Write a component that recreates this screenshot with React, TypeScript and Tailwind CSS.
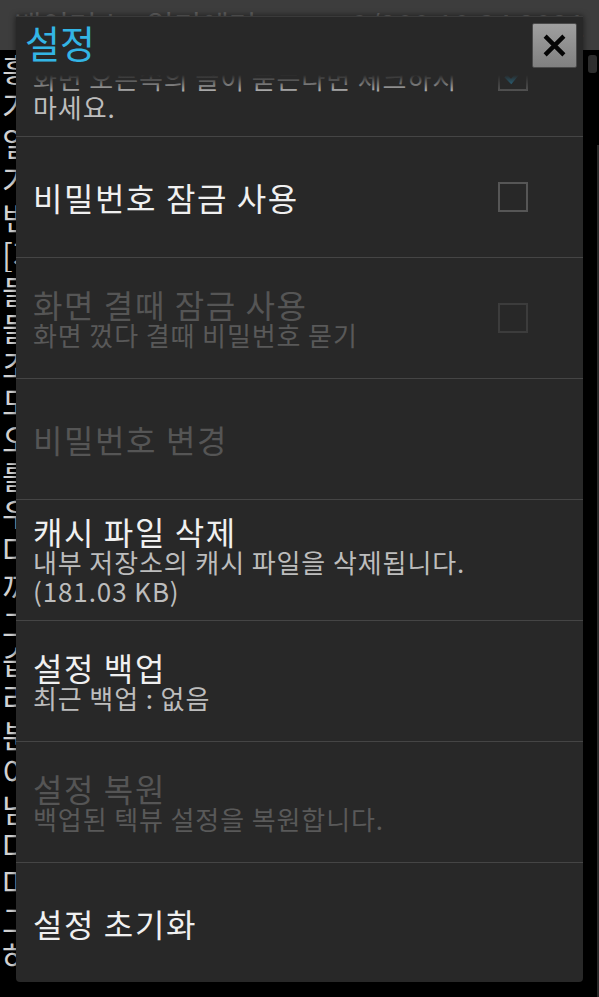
const bgLines = [
  "흥미로운 이야기가 시작되는 곳에서",
  "가끔은 그런 날도 있는 법이라고",
  "일단 모든 것을 내려놓고 생각해",
  "가장 먼저 떠오른 것은 그날의",
  "번개가 치던 밤 우리는 집으로",
  "[제 2 장] 낯선 손님이 찾아온",
  "들판을 가로지르는 바람 소리가 들려온 번",
  "들려오는 발걸음 소리에 모두가",
  "조용히 문을 열고 들어온 사람은",
  "모두가 그 사람을 바라보며",
  "오랜 시간이 지나도 잊히지 않는",
  "를 기억하는 사람은 이제",
  "우리는 그 길을 따라 천천히",
  "다시 만날 수 있을 거라고",
  "끼니를 거르며 밤새 이야기를",
  "그날 이후로 모든 것이 달라지기",
  "습관처럼 창밖을 바라보는 일이",
  "리본을 묶은 작은 상자가 책상",
  "분명히 어제까지는 없던 물건",
  "이상하게도 그 상자를 열 용기가",
  "남겨진 편지에는 짧은 인사만",
  "다음 날 아침 우리는 다시",
  "마지막으로 돌아본 마을은",
  "그리고 이야기는 그렇게",
  "하지만 누군가는 아직도",
];

type Item = {
  title: string;
  sub?: string[];
  disabled?: boolean;
  check?: "on" | "off";
};

const items: Item[] = [
  { title: "글 방향 반전", sub: ["화면 오른쪽의 글이 묻는다면 체크하지", "마세요."], check: "on" },
  { title: "비밀번호 잠금 사용", check: "off" },
  { title: "화면 결때 잠금 사용", sub: ["화면 껐다 결때 비밀번호 묻기"], disabled: true, check: "off" },
  { title: "비밀번호 변경", disabled: true },
  { title: "캐시 파일 삭제", sub: ["내부 저장소의 캐시 파일을 삭제됩니다.", "(181.03 KB)"] },
  { title: "설정 백업", sub: ["최근 백업 : 없음"] },
  { title: "설정 복원", sub: ["백업된 텍뷰 설정을 복원합니다."], disabled: true },
  { title: "설정 초기화" },
];

const SettingRow = ({ item }: { item: Item }) => {
  return (
    <div className="flex items-center h-[121px] shrink-0 pl-[17px] pr-[55px] border-b border-[#454545]">
      <div className="flex-1 flex flex-col">
        <p
          className={`text-[32px] leading-[32px] tracking-[1.6px] whitespace-nowrap ${
            item.disabled ? "text-[#555555]" : "text-[#f0f0f0]"
          }`}
        >
          {item.title}
        </p>
        {item.sub?.map((s) => (
          <p
            key={s}
            className={`text-[26px] leading-[29px] tracking-[0.9px] whitespace-nowrap ${
              item.disabled ? "text-[#595959]" : "text-[#bdbdbd]"
            }`}
          >
            {s}
          </p>
        ))}
      </div>
      {item.check && (
        <div
          className={`size-[30px] border-2 flex items-center justify-center ${
            item.disabled ? "border-[#3c3c3c]" : "border-[#565656]"
          }`}
        >
          {item.check === "on" && (
            <svg viewBox="0 0 24 24" className="size-[22px]">
              <path d="M4 12 L10 18 L20 6" fill="none" stroke="#2a8fb8" strokeWidth="4" />
            </svg>
          )}
        </div>
      )}
    </div>
  );
};

const App = () => {
  return (
    <div className="relative w-[599px] h-[997px] overflow-hidden bg-black font-['Noto_Sans_CJK_KR','Noto_Sans',sans-serif]">
      {/* page under the dialog */}
      <div className="h-[50px] bg-[#3d3d3d] flex items-start justify-between px-[14px] pt-[6px] text-[30px] leading-[36px] text-[#626262] whitespace-nowrap overflow-hidden">
        <span>밴이러스 : 읽기에러</span>
        <span>9/200 10:34 2021</span>
      </div>
      <div className="flex flex-col">
        {bgLines.map((l, i) => (
          <div key={i} className="pl-[2px] text-[32px] leading-[37px] text-[#d2d2d2] whitespace-nowrap overflow-hidden">
            {l}
          </div>
        ))}
      </div>
      <div className="absolute right-[2px] top-[55px] w-[9px] h-[18px] rounded-[3px] bg-[#2e2e2e]" />
      <div className="absolute right-0 top-[145px] bottom-0 w-[2px] bg-[#2a2a2a]" />

      {/* dialog */}
      <div className="absolute left-[16px] top-[16px] w-[567px] h-[966px] bg-[#282828] rounded-b-[4px] border-t border-[#3a3a3a] shadow-[0_0_6px_rgba(0,0,0,0.6)] flex flex-col overflow-hidden">
        <div className="h-[58px] shrink-0 flex items-start justify-between">
          <h1 className="pl-[9px] pt-[2px] text-[38px] leading-[46px] text-[#33b5e5]">설정</h1>
          <button className="mt-[6px] mr-[6px] size-[45px] flex items-center justify-center rounded-[2px] border border-[#4a4a4a] bg-linear-to-b from-[#a0a0a0] to-[#808080]">
            <svg viewBox="0 0 24 24" className="size-[25px]">
              <path d="M3 3 L21 21 M21 3 L3 21" stroke="#050505" strokeWidth="4.2" />
            </svg>
          </button>
        </div>
        <div className="relative flex-1 overflow-hidden">
          <div className="-mt-[59px] flex flex-col">
            {items.map((it) => (
              <SettingRow key={it.title} item={it} />
            ))}
          </div>
          <div className="absolute left-0 right-0 top-0 h-[18px] bg-linear-to-b from-[#282828] to-[#28282800]" />
        </div>
      </div>
    </div>
  );
};

export default App;
